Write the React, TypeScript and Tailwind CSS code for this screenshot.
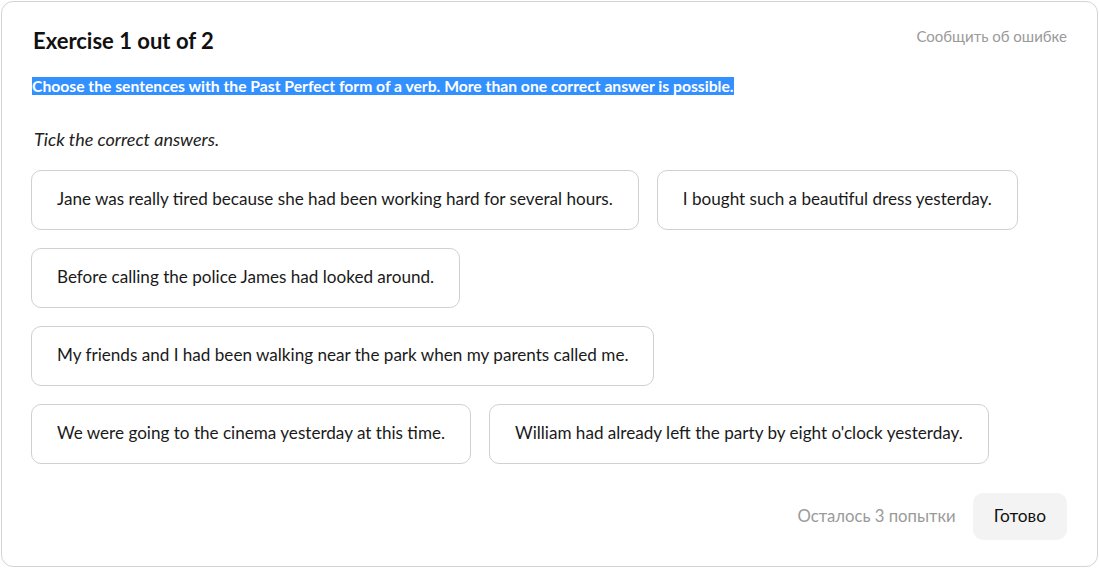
import React from "react";

const rows: string[][] = [
  [
    "Jane was really tired because she had been working hard for several hours.",
    "I bought such a beautiful dress yesterday.",
  ],
  ["Before calling the police James had looked around."],
  ["My friends and I had been walking near the park when my parents called me."],
  [
    "We were going to the cinema yesterday at this time.",
    "William had already left the party by eight o'clock yesterday.",
  ],
];

export default function App() {
  return (
    <div
      className="w-[1099px] h-[568px] bg-white p-px"
      style={{ fontFamily: "Lato, 'Noto Sans', sans-serif" }}
    >
      <div className="h-[566px] w-[1097px] rounded-[12px] border border-[#d4d4d4] bg-white pl-[29px] pr-[30px] pt-[24px] flex flex-col">
        <div className="flex items-start justify-between">
          <h1 className="text-[22px] font-bold leading-[30px] text-[#111] pl-[2px]">
            Exercise 1 out of 2
          </h1>
          <a className="text-[15px] leading-[20px] text-[#9a9a9a] mt-[0px]">
            Сообщить об ошибке
          </a>
        </div>
        <p className="mt-[20px] text-[15.7px] font-bold leading-[21px] pl-[1px]">
          <span className="bg-[#3390ff] text-white">
            Choose the sentences with the Past Perfect form of a verb. More than one correct answer is possible.
          </span>
        </p>
        <p className="mt-[31px] text-[18px] italic leading-[22px] text-[#222] pl-[3px]">
          Tick the correct answers.
        </p>
        <div className="mt-[20px] flex flex-col gap-[18px]">
          {rows.map((row, i) => (
            <div key={i} className="flex gap-[18px]">
              {row.map((t) => (
                <div
                  key={t}
                  className="h-[60px] flex items-center rounded-[10px] border border-[#d0d0d0] px-[25px] pb-[3px] text-[17.1px] text-[#1a1a1a]"
                >
                  {t}
                </div>
              ))}
            </div>
          ))}
        </div>
        <div className="mt-[29px] flex items-center justify-end gap-[17px]">
          <span className="text-[16.7px] text-[#9a9a9a] pt-[1px]">Осталось 3 попытки</span>
          <button className="h-[47px] px-[21px] pb-[2px] rounded-[10px] bg-[#f3f3f3] text-[17.3px] text-[#111]">
            Готово
          </button>
        </div>
      </div>
    </div>
  );
}
